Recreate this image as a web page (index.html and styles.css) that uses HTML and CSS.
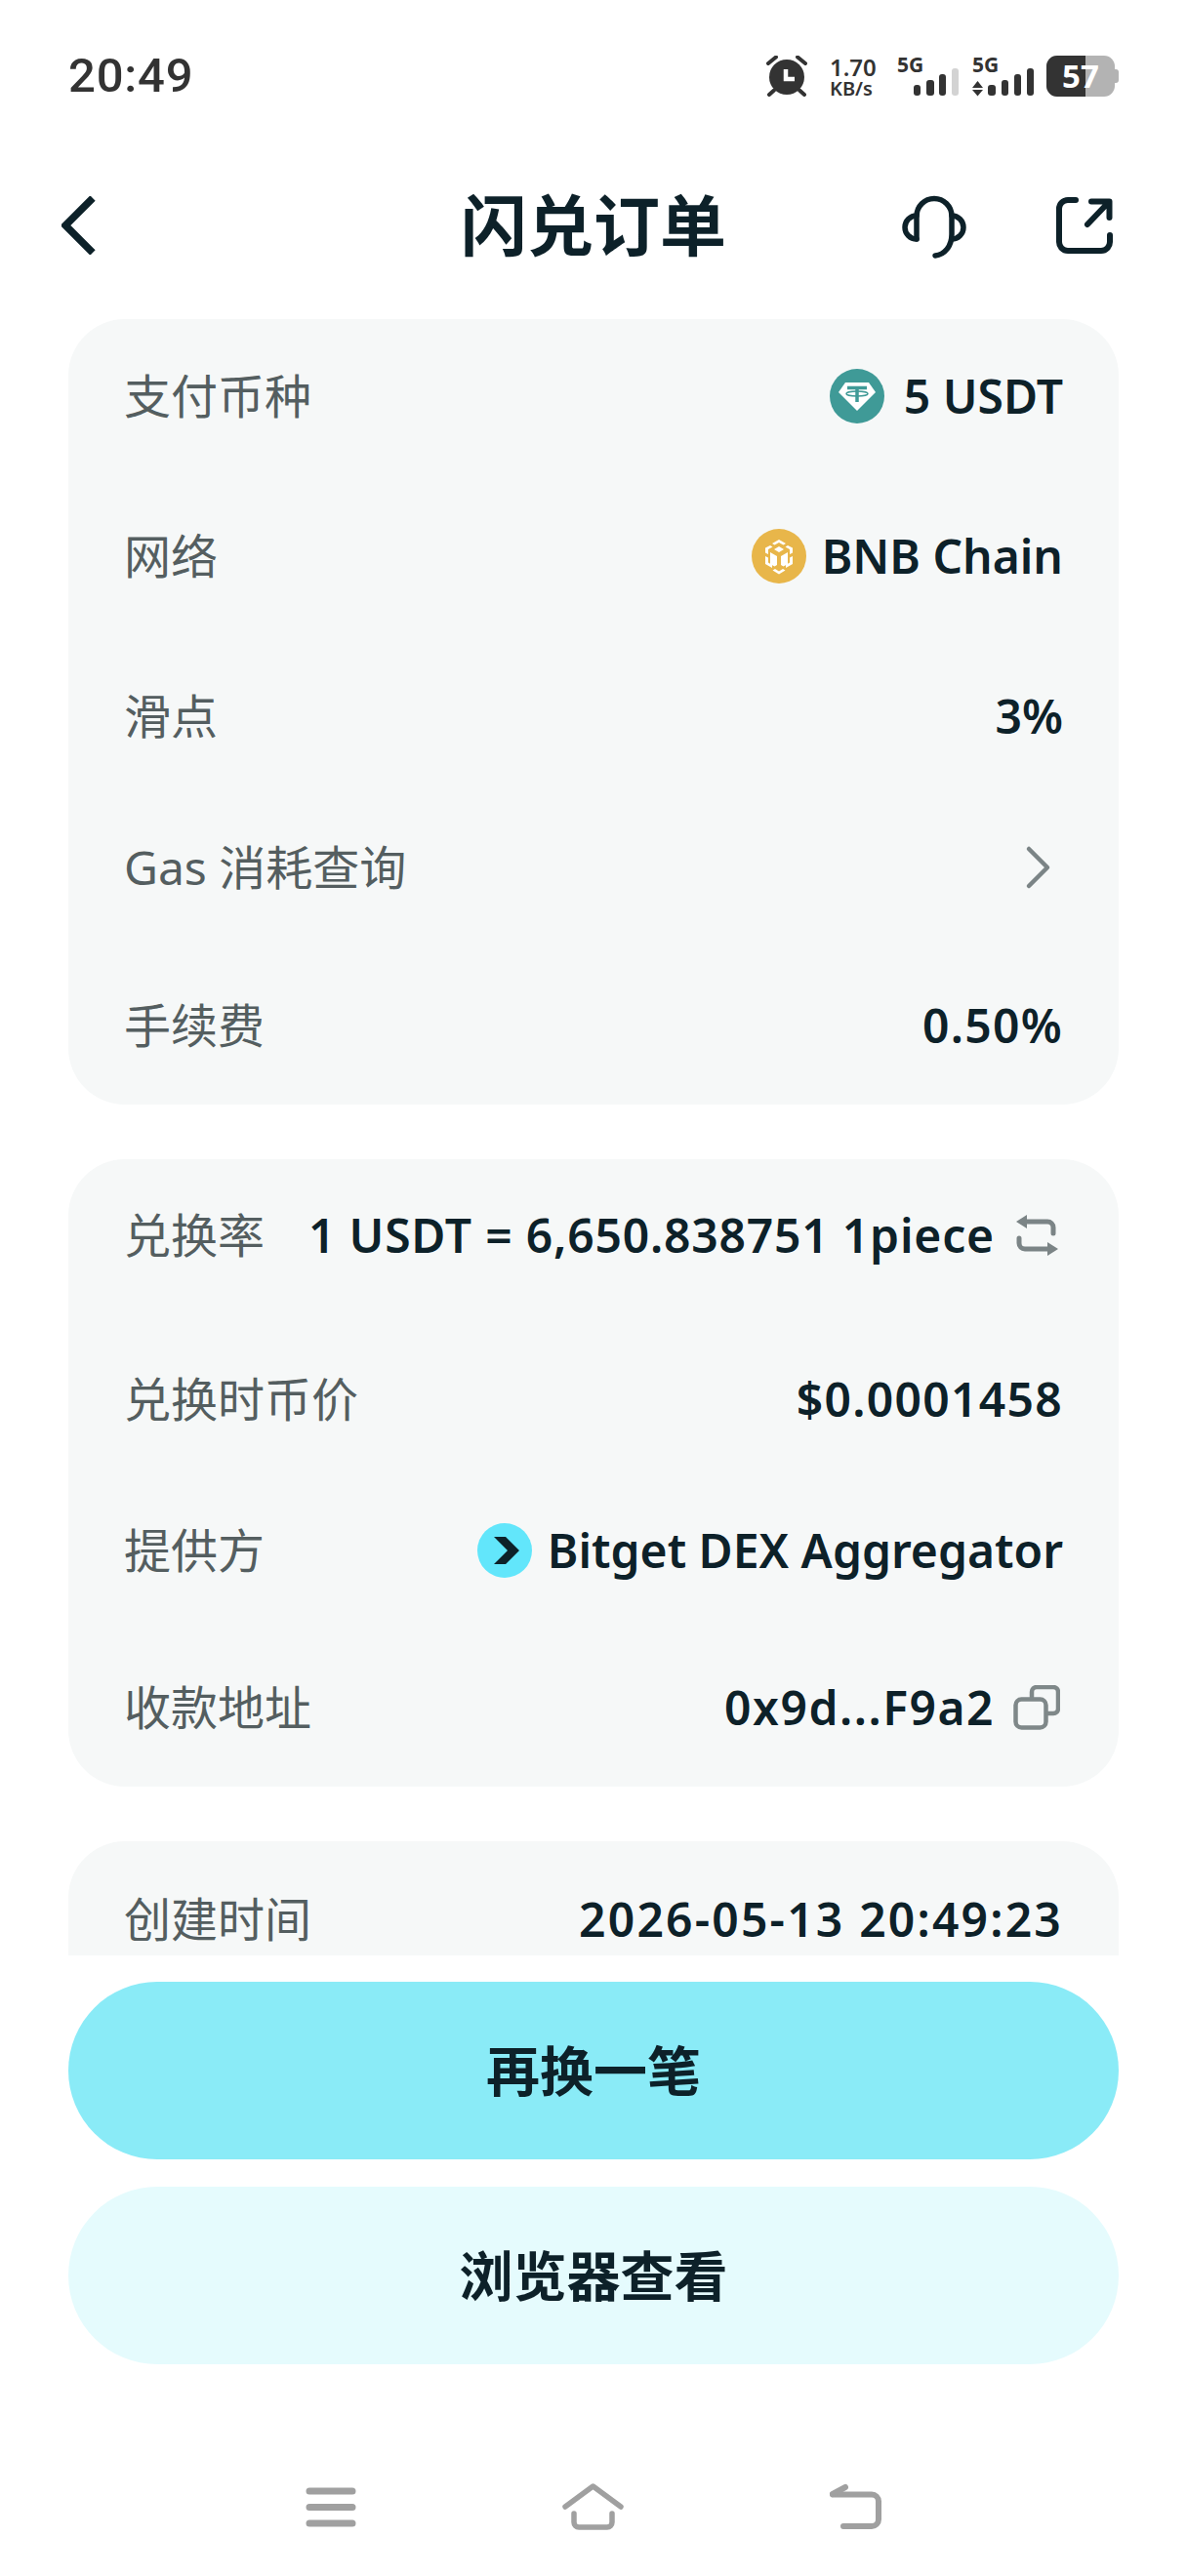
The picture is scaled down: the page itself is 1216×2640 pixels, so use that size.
FILE: index.html
```html
<!DOCTYPE html>
<html lang="zh-CN">
<head>
<meta charset="utf-8">
<title>闪兑订单</title>
<link rel="stylesheet" href="styles.css">
</head>
<body>
<div class="app">
  <div class="status">
    <span class="clock">20:49</span>
    <div class="status-icons">
      <svg class="ic-alarm" viewBox="0 0 42 42"><circle cx="21" cy="22" r="18" fill="#333"/><path d="M2 8l8-6.500M40 8l-8-6.500M3 40l5-4.500M39 40l-5-4.500" stroke="#333" stroke-width="4" stroke-linecap="round" fill="none"/><path d="M20 14v10h9" stroke="#fff" stroke-width="4.500" fill="none"/></svg>
      <div class="speed"><span>1.70</span><span class="speed-unit">KB/s</span></div>
      <div class="signal signal-a">
        <span class="net">5G</span>
        <svg class="ic-sig" viewBox="0 0 63 42"><rect x="17" y="30" width="7" height="11" rx="3" fill="#333"/><rect x="30" y="25" width="8" height="16" rx="3" fill="#333"/><rect x="43" y="19" width="7" height="22" rx="3" fill="#333"/><rect x="56" y="13" width="7" height="28" rx="3" fill="#d3d3d3"/></svg>
      </div>
      <div class="signal signal-b">
        <span class="net">5G</span>
        <svg class="ic-sig" viewBox="0 0 63 42"><path d="M5.500 26L11 33H0zM0 35h11l-5.500 6.500z" fill="#333"/><rect x="16" y="30" width="8" height="11" rx="3" fill="#333"/><rect x="30" y="25" width="7" height="16" rx="3" fill="#333"/><rect x="43" y="19" width="7" height="22" rx="3" fill="#333"/><rect x="56" y="13" width="7" height="28" rx="3" fill="#333"/></svg>
      </div>
      <div class="battery"><div class="battery-fill"></div><span class="battery-text">57</span><div class="battery-cap"></div></div>
    </div>
  </div>

  <header class="nav">
    <svg class="ic-back" viewBox="0 0 36 60"><path d="M32 2L4 30l28 28" fill="none" stroke="#0d2129" stroke-width="7.500"/></svg>
    <h1 class="title">闪兑订单</h1>
    <div class="nav-actions">
      <svg class="ic-head" viewBox="0 0 76 76"><path d="M19 50V26.500a18 18 0 0 1 36 0V45c0 12-7 21-17 22" fill="none" stroke="#0d2129" stroke-width="5.500" stroke-linecap="round"/><path d="M19 26a12 12 0 0 0 0 24M55 26a12 12 0 0 1 0 24" fill="none" stroke="#0d2129" stroke-width="5.500" stroke-linecap="round"/></svg>
      <svg class="ic-share" viewBox="0 0 64 64"><path d="M22 6H14a9 9 0 0 0-9 9v34a9 9 0 0 0 9 9h34a9 9 0 0 0 9-9v-7" fill="none" stroke="#0d2129" stroke-width="6" stroke-linecap="round"/><path d="M38 7.500h18.500V24M34 31L55 9" fill="none" stroke="#0d2129" stroke-width="6" stroke-linecap="round" stroke-linejoin="round"/></svg>
    </div>
  </header>

  <main class="scroll">
    <section class="card card-pay">
      <div class="row"><span class="label">支付币种</span><span class="value"><svg class="coin coin-usdt" viewBox="0 0 56 56"><circle cx="28" cy="28" r="28" fill="#3f9a97"/><path d="M16 14h24l7 10-19 19L9 24z" fill="#fff"/><path d="M18 19.500h20M28 19.500V34" stroke="#3f9a97" stroke-width="3.500" fill="none"/><ellipse cx="28" cy="25.500" rx="11" ry="2.500" stroke="#3f9a97" stroke-width="1.500" fill="none"/></svg>5 USDT</span></div>
      <div class="row"><span class="label">网络</span><span class="value"><svg class="coin" viewBox="0 0 56 56"><circle cx="28" cy="28" r="28" fill="#e8b64a"/><path d="M28 11l7 4-2.500 1.500L28 14l-4.500 2.500L21 15zM28 18l5 3-5 3-5-3zM19 17l2.500 1.500L17 21v5l-3-1.500v-5zM37 17l-2.500 1.500L39 21v5l3-1.500v-5zM14 28l3 1.500v5l4 2.500v3l-7-4zM42 28l-3 1.500v5l-4 2.500v3l7-4zM19 24l7 4v9l-2.500 1.500L19 36zM37 24l-7 4v9l2.500 1.500L37 36zM24 41l4 2.500 4-2.500 2.500 1.500L28 46.500l-6.500-4z" fill="#fff"/></svg>BNB Chain</span></div>
      <div class="row"><span class="label">滑点</span><span class="value">3%</span></div>
      <div class="row"><span class="label">Gas 消耗查询</span><svg class="ic-chev" viewBox="0 0 28 46"><path d="M4 4l19 19L4 42" fill="none" stroke="#7b8486" stroke-width="4.500" stroke-linecap="round" stroke-linejoin="round"/></svg></div>
      <div class="row"><span class="label">手续费</span><span class="value num-s">0.50%</span></div>
    </section>

    <section class="card card-swap">
      <div class="row"><span class="label">兑换率</span><span class="value"><span class="num-xs">1 USDT = 6,650.838751 1piece</span><svg class="ic-swap" viewBox="0 0 44 44"><path d="M12 1L1 8l11 7z" fill="#7b8486"/><path d="M12 8h21a6 6 0 0 1 6 6v6" fill="none" stroke="#7b8486" stroke-width="5" stroke-linecap="round"/><path d="M33 29l11 7-11 7z" fill="#7b8486"/><path d="M33 36H10a6 6 0 0 1-6-6v-5" fill="none" stroke="#7b8486" stroke-width="5" stroke-linecap="round"/></svg></span></div>
      <div class="row"><span class="label">兑换时币价</span><span class="value num-s">$0.0001458</span></div>
      <div class="row"><span class="label">提供方</span><span class="value"><svg class="coin" viewBox="0 0 56 56"><circle cx="28" cy="28" r="28" fill="#62e6fb"/><path d="M17 14h12l14 14-14 14H17l14-14z" fill="#0d2129"/></svg>Bitget DEX Aggregator</span></div>
      <div class="row"><span class="label">收款地址</span><span class="value"><span class="num-m">0x9d...F9a2</span><svg class="ic-copy" viewBox="0 0 48 46"><path d="M19 13V7a5 5 0 0 1 5-5h17a5 5 0 0 1 5 5v17a5 5 0 0 1-5 5h-6" fill="none" stroke="#7f8889" stroke-width="4.500"/><rect x="2.500" y="14.500" width="31" height="29" rx="6" fill="none" stroke="#7f8889" stroke-width="4.500"/></svg></span></div>
    </section>

    <section class="card card-time">
      <div class="row"><span class="label">创建时间</span><span class="value num-l">2026-05-13 20:49:23</span></div>
    </section>
  </main>

  <footer class="actions">
    <button class="btn btn-primary">再换一笔</button>
    <button class="btn btn-soft">浏览器查看</button>
  </footer>

  <nav class="sysnav">
    <svg class="ic-menu" viewBox="0 0 52 42"><path d="M4 4h44M4 20.500h44M4 37h44" stroke="#a0a0a0" stroke-width="7" stroke-linecap="round" fill="none"/></svg>
    <svg class="ic-home" viewBox="0 0 64 50"><path d="M3 24L31.500 3 60 24" fill="none" stroke="#a0a0a0" stroke-width="5.500" stroke-linecap="round" stroke-linejoin="round"/><path d="M12 31v9a5 5 0 0 0 5 5h29a5 5 0 0 0 5-5v-9" fill="none" stroke="#a0a0a0" stroke-width="5.500" stroke-linecap="round"/></svg>
    <svg class="ic-return" viewBox="0 0 56 50"><path d="M4 11.500h40a7 7 0 0 1 7 7V37a7 7 0 0 1-7 7H15" fill="none" stroke="#a0a0a0" stroke-width="6" stroke-linecap="round"/><path d="M4 11L17 4" fill="none" stroke="#a0a0a0" stroke-width="6" stroke-linecap="round"/></svg>
  </nav>
</div>
</body>
</html>
```
FILE: styles.css
```css
* { box-sizing: border-box; }
html, body { margin: 0; padding: 0; background: #fff; }
body { font-family: "Noto Sans", "Noto Sans CJK SC", sans-serif; }
.app { width: 1216px; height: 2640px; display: flex; flex-direction: column; overflow: hidden; }

.status { height: 192px; padding: 48px 70px 0; display: flex; justify-content: space-between; align-items: flex-start; flex: none; }
.clock { font-family: "Roboto", sans-serif; font-size: 49px; font-weight: 500; line-height: 60px; color: #333; letter-spacing: 0.800px; }
.status-icons { display: flex; align-items: flex-start; height: 42px; margin-top: 9px; }
.ic-alarm { width: 42px; height: 42px; }
.speed { width: 48px; margin-left: 23px; display: flex; flex-direction: column; font-size: 24px; font-weight: 600; line-height: 24px; color: #333; }
.speed-unit { font-size: 20px; line-height: 20px; }
.signal { position: relative; width: 63px; height: 42px; }
.signal-a { margin-left: 21px; }
.signal-b { margin-left: 14px; }
.ic-sig { display: block; width: 63px; height: 42px; }
.net { position: absolute; left: 0; top: -3px; font-size: 21px; font-weight: 700; line-height: 24px; color: #333; }
.battery { position: relative; margin-left: 13px; margin-right: 4px; width: 70px; height: 42px; border-radius: 11px; background: #b3b3b3; }
.battery-fill { position: absolute; inset: 0 30px 0 0; background: #333; border-radius: 11px 0 0 11px; }
.battery-text { position: absolute; left: 16px; top: 0; font-size: 33px; font-weight: 700; line-height: 42px; color: #fff; }
.battery-cap { position: absolute; right: -4px; top: 14px; width: 4px; height: 14px; background: #b3b3b3; border-radius: 0 3px 3px 0; }

.nav { height: 78px; padding: 0 72px 0 63px; display: flex; align-items: center; justify-content: space-between; position: relative; flex: none; }
.ic-back { width: 36px; height: 60px; }
.title { position: absolute; left: 0; right: 0; top: 0; margin: 0; text-align: center; font-size: 68px; font-weight: 600; line-height: 78px; color: #0d2129; }
.nav-actions { display: flex; align-items: center; gap: 84px; position: relative; }
.ic-head { width: 76px; height: 76px; margin-top: 4px; }
.ic-share { width: 64px; height: 64px; }

.scroll { height: 1734px; padding: 57px 70px 0; display: flex; flex-direction: column; gap: 56px; overflow: hidden; flex: none; }
.card { background: #f6f8f8; border-radius: 58px; padding: 0 57px; flex: none; display: flex; flex-direction: column; }
.row { height: 48px; display: flex; align-items: center; justify-content: space-between; flex: none; }
.label { font-size: 48px; color: #545e60; line-height: 48px; white-space: nowrap; }
.value { display: flex; align-items: center; font-size: 48px; font-weight: 600; color: #0d2129; line-height: 48px; white-space: nowrap; }
.num-xs { letter-spacing: 0.800px; }
.num-s { letter-spacing: 1.300px; }
.num-m { letter-spacing: 1.500px; }
.num-l { letter-spacing: 2.200px; }
.coin { width: 56px; height: 56px; margin-right: 16px; flex: none; }
.coin-usdt { margin-right: 20px; }
.ic-chev { width: 28px; height: 46px; margin-right: 11px; }
.ic-swap { width: 44px; height: 44px; margin-left: 21px; margin-right: 5px; }
.ic-copy { width: 48px; height: 46px; margin-left: 19px; margin-right: 3px; }

.card-pay { height: 805px; padding-top: 55px; }
.card-pay .row:nth-child(2) { margin-top: 116px; }
.card-pay .row:nth-child(3) { margin-top: 116px; }
.card-pay .row:nth-child(4) { margin-top: 107px; }
.card-pay .row:nth-child(5) { margin-top: 114px; }
.card-swap { height: 643px; padding-top: 54px; }
.card-swap .row:nth-child(2) { margin-top: 120px; }
.card-swap .row:nth-child(3) { margin-top: 107px; }
.card-swap .row:nth-child(4) { margin-top: 113px; }
.card-time { height: 200px; padding-top: 56px; }

.actions { padding: 27px 70px 0; display: flex; flex-direction: column; gap: 28px; flex: none; }
.btn { height: 182px; border: 0; border-radius: 91px; padding: 0 0 6px; font-family: inherit; font-size: 55px; font-weight: 600; color: #0d2129; }
.btn-primary { background: #8aebf7; }
.btn-soft { background: #e5fbfd; }

.sysnav { position: relative; flex: 1; }
.sysnav svg { position: absolute; }
.ic-menu { left: 313px; top: 126px; width: 52px; height: 42px; }
.ic-home { left: 576px; top: 122px; width: 64px; height: 50px; }
.ic-return { left: 849px; top: 122px; width: 56px; height: 50px; }
```
